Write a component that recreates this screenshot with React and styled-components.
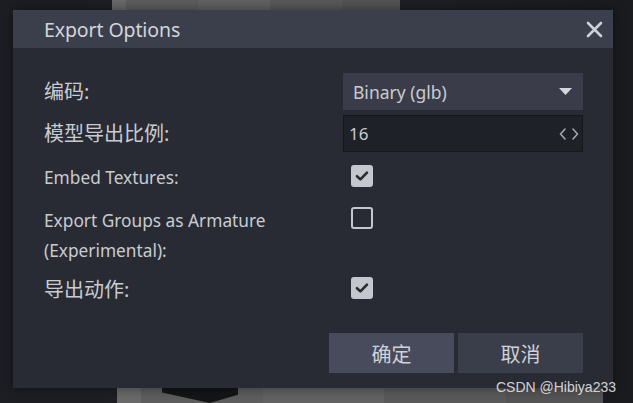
import React from 'react';
import styled, { createGlobalStyle } from 'styled-components';

const GlobalStyle = createGlobalStyle`
  html, body {
    margin: 0;
    padding: 0;
    background: #1b1d22;
  }
  body {
    font-family: "Noto Sans", "Noto Sans CJK SC", sans-serif;
  }
`;

const Stage = styled.div`
  position: relative;
  width: 633px;
  height: 403px;
  overflow: hidden;
  background: linear-gradient(90deg, #1c1e23 0%, #1e2025 60%, #191b1f 100%);
  padding: 10px 0 0 13px;
  box-sizing: border-box;
`;

const ViewportBlock = styled.div`
  position: absolute;
  background: linear-gradient(
    90deg,
    #6a6a6a 0,
    #6a6a6a 5%,
    #5e5e5e 5%,
    #5e5e5e 30%,
    #636363 30%,
    #636363 55%,
    #5a5a5a 55%,
    #5a5a5a 80%,
    #555555 80%
  );
`;

const Chevron = styled.div`
  position: absolute;
  left: 162px;
  bottom: 0;
  width: 76px;
  height: 15px;
  background: #141518;
  clip-path: polygon(0 0, 100% 0, 100% 45%, 63% 100%, 0 30%);
`;

const Dialog = styled.div`
  position: relative;
  z-index: 1;
  width: 600px;
  height: 378px;
  background: #282b34;
  box-shadow: 0 0 12px rgba(0, 0, 0, 0.45);
  display: flex;
  flex-direction: column;
`;

const TitleBar = styled.div`
  height: 38px;
  background: #3b3f4b;
  display: flex;
  align-items: center;
  justify-content: space-between;
  padding: 0 7px 0 31px;
`;

const Title = styled.h2`
  margin: 0;
  font-size: 19.5px;
  font-weight: 400;
  color: #d3d5db;
  letter-spacing: -0.1px;
`;

const CloseButton = styled.button`
  width: 24px;
  height: 24px;
  border: 0;
  padding: 0;
  background: transparent;
  display: flex;
  align-items: center;
  justify-content: center;
  cursor: pointer;
`;

const Body = styled.div`
  padding: 25px 30px 15px 31px;
  display: flex;
  flex-direction: column;
`;

const Row = styled.div`
  display: grid;
  grid-template-columns: 299px 240px;
  align-items: ${(p) => (p.$top ? 'start' : 'center')};
  min-height: ${(p) => p.$height}px;
  margin-bottom: ${(p) => p.$gap || 0}px;
`;

const Label = styled.label`
  color: #c9cbd1;
  font-size: ${(p) => (p.$cjk ? 20 : 17.3)}px;
  line-height: 30px;
`;

const Select = styled.div`
  height: 37px;
  background: #3a3d49;
  display: flex;
  align-items: center;
  justify-content: space-between;
  padding: 0 11px 0 10px;
  box-sizing: border-box;
  color: #c9cbd1;
  font-size: 17.5px;
`;

const NumberInput = styled.div`
  height: 37px;
  background: #1f2128;
  border: 1px solid #16171b;
  box-sizing: border-box;
  display: flex;
  align-items: center;
  justify-content: space-between;
  padding: 0 3px 0 5px;
  color: #c9cbd1;
  font-size: 17px;
`;

const Checkbox = styled.div`
  width: 22px;
  height: 22px;
  box-sizing: border-box;
  border-radius: 3px;
  margin: ${(p) => p.$offset || 0}px 0 0 8px;
  border: 2px solid #c5c7cf;
  background: ${(p) => (p.$checked ? '#c5c7cf' : 'transparent')};
  display: flex;
  align-items: center;
  justify-content: center;
`;

const Buttons = styled.div`
  display: flex;
  justify-content: flex-end;
  gap: 4px;
  margin-top: 28px;
`;

const Button = styled.button`
  width: 125px;
  height: 40px;
  border: 0;
  background: ${(p) => (p.$primary ? '#474b5b' : '#3a3d4a')};
  color: #d0d2d8;
  font-family: "Noto Sans CJK SC", "Noto Sans", sans-serif;
  font-size: 20px;
  padding: 0;
  cursor: pointer;
`;

const Watermark = styled.div`
  position: absolute;
  right: 17px;
  bottom: 8px;
  z-index: 2;
  font-family: "Liberation Sans", Arial, sans-serif;
  font-size: 14px;
  color: rgba(230, 230, 232, 0.9);
`;

const Check = () => (
  <svg width="14" height="12" viewBox="0 0 14 12">
    <path d="M2 6.2 L5.4 9.4 L12 2.6" fill="none" stroke="#282b34" strokeWidth="2.6" strokeLinecap="round" strokeLinejoin="round" />
  </svg>
);

const options = [
  { label: 'Embed Textures:', checked: true, height: 30, gap: 13, offset: 2 },
  { label: 'Export Groups as Armature\n(Experimental):', checked: false, height: 60, gap: 9, offset: 1 },
  { label: '导出动作:', cjk: true, checked: true, height: 30, gap: 0, offset: 2 },
];

export default function App() {
  return (
    <>
      <GlobalStyle />
      <Stage>
        <ViewportBlock style={{ left: 112, top: 0, width: 288, height: 10 }} />
        <ViewportBlock style={{ left: 117, top: 388, width: 486, height: 15 }} />
        <Chevron />
        <Dialog>
          <TitleBar>
            <Title>Export Options</Title>
            <CloseButton aria-label="close">
              <svg width="17" height="17" viewBox="0 0 17 17">
                <path d="M2 2 L15 15 M15 2 L2 15" stroke="#cdd0d6" strokeWidth="2.6" strokeLinecap="round" />
              </svg>
            </CloseButton>
          </TitleBar>
          <Body>
            <Row $height={37} $gap={5}>
              <Label $cjk>编码:</Label>
              <Select>
                <span>Binary (glb)</span>
                <svg width="13" height="7" viewBox="0 0 13 7">
                  <path d="M0 0 H13 L6.5 7 Z" fill="#d4d6dc" />
                </svg>
              </Select>
            </Row>
            <Row $height={37} $gap={11}>
              <Label $cjk>模型导出比例:</Label>
              <NumberInput>
                <span>16</span>
                <svg width="20" height="12" viewBox="0 0 20 12">
                  <path d="M6 1 L1.5 6 L6 11 M14 1 L18.5 6 L14 11" fill="none" stroke="#a4a7b0" strokeWidth="1.6" strokeLinecap="round" strokeLinejoin="round" />
                </svg>
              </NumberInput>
            </Row>
            {options.map((o) => (
              <Row key={o.label} $height={o.height} $gap={o.gap} $top>
                <Label $cjk={o.cjk}>
                  {o.label.split('\n').map((line) => (
                    <div key={line}>{line}</div>
                  ))}
                </Label>
                <Checkbox $checked={o.checked} $offset={o.offset}>
                  {o.checked && <Check />}
                </Checkbox>
              </Row>
            ))}
            <Buttons>
              <Button $primary>确定</Button>
              <Button>取消</Button>
            </Buttons>
          </Body>
        </Dialog>
        <Watermark>CSDN @Hibiya233</Watermark>
      </Stage>
    </>
  );
}
